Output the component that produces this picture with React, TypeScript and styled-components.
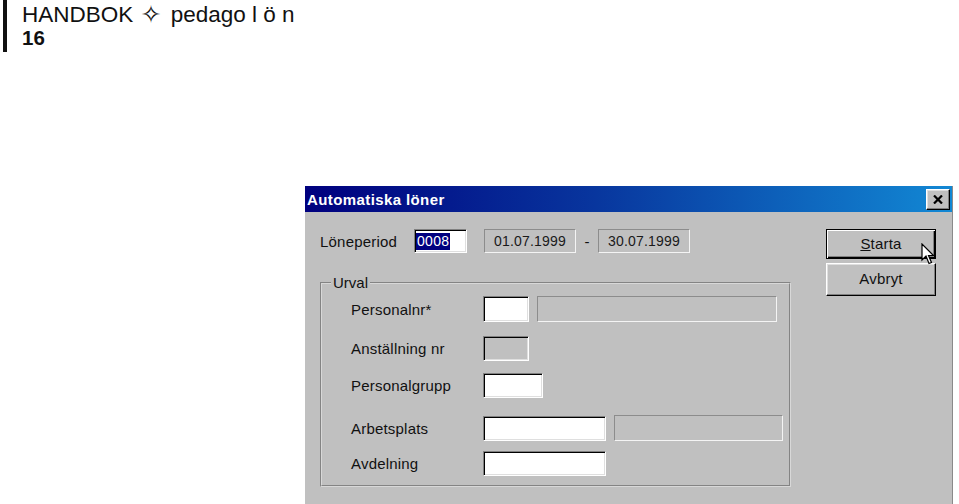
import React from 'react'
import styled, { createGlobalStyle } from 'styled-components'

const GlobalStyle = createGlobalStyle`
    html, body { margin: 0; padding: 0; background: #FFFFFF; }
    body {
        width: 959px; height: 504px;
        overflow: hidden;
        font-family: "Liberation Sans", Arial, sans-serif;
    }
`

const Page = styled.div`
    width: 959px; height: 504px;
    overflow: hidden;
`

const Header = styled.header`
    height: 52px;
    margin-left: 3px;
    padding: 3px 0 0 15px;
    box-sizing: border-box;
    border-left: 4px solid #111111;
    color: #111111;
`

const HeaderTitle = styled.div`
    font-size: 22.5px;
    line-height: 24px;
    white-space: nowrap;
    .star{ font-family: "DejaVu Sans", sans-serif; font-size: 25px; margin: 0 3px 0 1px; vertical-align: -1px; }
`

const PageNumber = styled.div`
    font-size: 20.5px;
    line-height: 22px;
    font-weight: bold;
`

const Dialog = styled.section`
    width: 648px; height: 330px;
    margin: 134px 0 0 305px;
    background: #C0C0C0;
    border-right: 1px solid #8A8A8A;
    box-sizing: border-box;
`

const TitleBar = styled.div`
    height: 26px;
    display: flex;
    align-items: center;
    justify-content: space-between;
    padding: 0 2px 0 2px;
    background: linear-gradient( to right, #00007E 0%, #08369E 45%, #1288D4 100% );
    color: #FFFFFF;
    font-weight: bold;
    font-size: 15px;
    letter-spacing: 0.4px;
`

const CloseButton = styled.button`
    width: 24px; height: 21px;
    padding: 0;
    display: grid;
    place-items: center;
    background: #C0C0C0;
    border: 1px solid;
    border-color: #FFFFFF #000000 #000000 #FFFFFF;
    box-shadow: inset -1px -1px #808080, inset 1px 1px #DFDFDF;
`

const Body = styled.div`
    display: flex;
    justify-content: space-between;
    padding: 17px 16px 0 15px;
    font-size: 15px;
    color: #111111;
`

const Main = styled.div`
    width: 471px;
`

const PeriodRow = styled.div`
    display: flex;
    align-items: center;
    height: 24px;
`

const PeriodLabel = styled.span`
    width: 94px;
    letter-spacing: 0.2px;
`

const TextInput = styled.div<{ $w: number; $h?: number; $white?: boolean }>`
    width: ${ p => p.$w }px;
    height: ${ p => p.$h ?? 25 }px;
    box-sizing: border-box;
    background: ${ p => p.$white ? '#FFFFFF' : '#C0C0C0' };
    border: 1px solid;
    border-color: #808080 #FFFFFF #FFFFFF #808080;
    box-shadow: inset 1px 1px #000000, inset -1px -1px #DFDFDF;
    display: flex;
    align-items: center;
    padding-left: 1px;
    font-size: 14px;
`

const Selected = styled.span`
    background: #000080;
    color: #FFFFFF;
    line-height: 17px;
    padding: 0 1px;
    letter-spacing: 0.3px;
`

const StaticField = styled.div<{ $w: number; $h?: number }>`
    width: ${ p => p.$w }px;
    height: ${ p => p.$h ?? 24 }px;
    box-sizing: border-box;
    border: 1px solid;
    border-color: #8C8C8C #F4F4F4 #F4F4F4 #8C8C8C;
    display: grid;
    place-items: center;
    font-size: 14px;
    letter-spacing: 0.2px;
    color: #1A1A1A;
`

const DateInput = styled( StaticField )`
    margin-left: 17px;
`

const Dash = styled.span`
    width: 22px;
    text-align: center;
`

const Group = styled.fieldset`
    margin: 21px 0 0 0;
    padding: 0 0 9px 0;
    width: 471px;
    box-sizing: border-box;
    border: 2px groove #D8D8D8;
    min-width: 0;
`

const GroupLegend = styled.legend`
    margin-left: 9px;
    padding: 0 2px;
    line-height: 18px;
    font-size: 15px;
`

const Row = styled.div<{ $top: number }>`
    display: flex;
    align-items: center;
    gap: 8px;
    margin-top: ${ p => p.$top }px;
    padding-left: 29px;
`

const RowLabel = styled.span`
    width: 124px;
    letter-spacing: 0.2px;
`

const Buttons = styled.div`
    width: 110px;
    display: flex;
    flex-direction: column;
    gap: 4px;
    position: relative;
`

const Button = styled.button<{ $default?: boolean; $h: number }>`
    height: ${ p => p.$h }px;
    width: 110px;
    padding: 0 0 2px 0;
    background: #C0C0C0;
    font-family: "Liberation Sans", Arial, sans-serif;
    font-size: 15px;
    color: #111111;
    letter-spacing: 0.2px;
    border: 1px solid;
    border-color: ${ p => p.$default ? '#000000' : '#FFFFFF #000000 #000000 #FFFFFF' };
    box-shadow: ${ p => p.$default
        ? 'inset 1px 1px #FFFFFF, inset -1px -1px #000000, inset -2px -2px #808080'
        : 'inset -1px -1px #808080, inset 1px 1px #DFDFDF' };
`

const Cursor = styled.svg`
    position: absolute;
    left: 95px; top: 14px;
`

export default function App() {
    return <Page>
        <GlobalStyle />
        <Header>
            <HeaderTitle>HANDBOK <span className="star">✧</span> pedago l ö n</HeaderTitle>
            <PageNumber>16</PageNumber>
        </Header>
        <Dialog>
            <TitleBar>
                <span>Automatiska löner</span>
                <CloseButton aria-label="Stäng">
                    <svg width="10" height="9" viewBox="0 0 10 9">
                        <path d="M1 0.5 L9 8.5 M9 0.5 L1 8.5" stroke="#000" strokeWidth="2.2" />
                    </svg>
                </CloseButton>
            </TitleBar>
            <Body>
                <Main>
                    <PeriodRow>
                        <PeriodLabel>Löneperiod</PeriodLabel>
                        <TextInput $w={ 53 } $h={ 24 } $white><Selected>0008</Selected></TextInput>
                        <DateInput $w={ 92 }>01.07.1999</DateInput>
                        <Dash>-</Dash>
                        <StaticField $w={ 92 }>30.07.1999</StaticField>
                    </PeriodRow>
                    <Group>
                        <GroupLegend>Urval</GroupLegend>
                        <Row $top={ 4 }>
                            <RowLabel>Personalnr*</RowLabel>
                            <TextInput $w={ 46 } $h={ 26 } $white />
                            <StaticField $w={ 240 } $h={ 26 } />
                        </Row>
                        <Row $top={ 14 }>
                            <RowLabel>Anställning nr</RowLabel>
                            <TextInput $w={ 46 } />
                        </Row>
                        <Row $top={ 12 }>
                            <RowLabel>Personalgrupp</RowLabel>
                            <TextInput $w={ 60 } $white />
                        </Row>
                        <Row $top={ 17 }>
                            <RowLabel>Arbetsplats</RowLabel>
                            <TextInput $w={ 123 } $white />
                            <StaticField $w={ 169 } $h={ 26 } />
                        </Row>
                        <Row $top={ 10 }>
                            <RowLabel>Avdelning</RowLabel>
                            <TextInput $w={ 123 } $white />
                        </Row>
                    </Group>
                </Main>
                <Buttons>
                    <Button $default $h={ 30 }><u>S</u>tarta</Button>
                    <Button $h={ 33 }>Avbryt</Button>
                    <Cursor width="14" height="22" viewBox="0 0 14 22">
                        <path d="M1 1 L1 17 L5 13 L8 20.5 L10.5 19.5 L7.5 12.5 L12.5 12.5 Z"
                            fill="#FFFFFF" stroke="#000000" strokeWidth="1.2" strokeLinejoin="miter" />
                    </Cursor>
                </Buttons>
            </Body>
        </Dialog>
    </Page>
}
